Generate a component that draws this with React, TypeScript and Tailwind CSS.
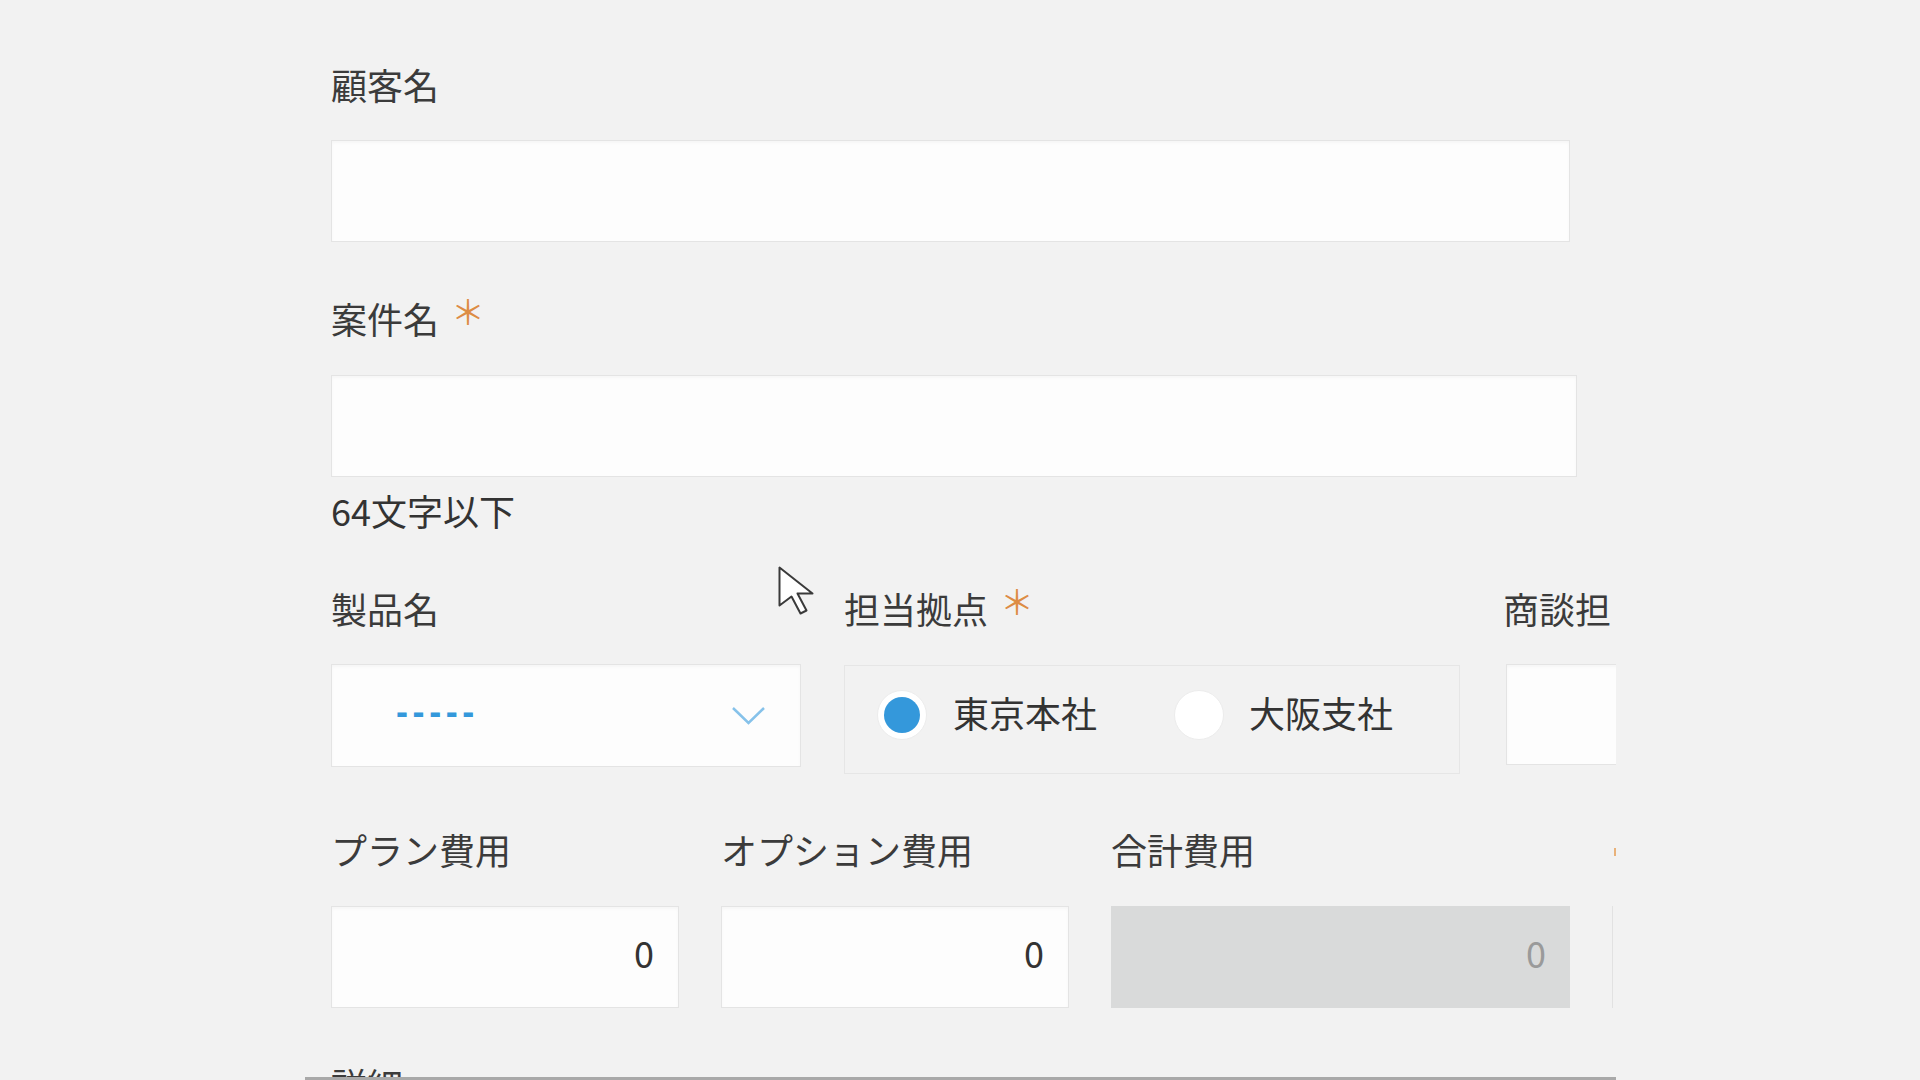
import React from 'react';

const Asterisk: React.FC = () => (
  <span className="relative -top-[9px] ml-[12px] text-[34px] text-[#dd8c45]">＊</span>
);

const Label: React.FC<{ text: string; required?: boolean }> = ({ text, required }) => (
  <div className="h-[48px] leading-[42px] text-[36px] text-[#3b3b3b] whitespace-nowrap">
    {text}
    {required && <Asterisk />}
  </div>
);

const inputBox =
  'border border-[#e4e4e4] bg-[#fdfdfd] shadow-[inset_0_2px_3px_rgba(0,0,0,0.03)]';

const NumberField: React.FC<{ label: string; width: string; disabled?: boolean }> = ({
  label,
  width,
  disabled,
}) => (
  <div className={`shrink-0 ${width}`}>
    <Label text={label} />
    <div
      className={`mt-[30px] h-[102px] flex items-center justify-end pr-[24px] pb-[10px] text-[36px] ${
        disabled ? 'bg-[#d9dada] text-[#9a9a9a]' : `${inputBox} text-[#333]`
      }`}
    >
      0
    </div>
  </div>
);

const Radio: React.FC<{ checked?: boolean }> = ({ checked }) => (
  <span className="w-[50px] h-[50px] rounded-full bg-white border border-[#ececec] flex items-center justify-center shrink-0">
    {checked && <span className="w-[36px] h-[36px] rounded-full bg-[#3498db]" />}
  </span>
);

const Cursor: React.FC = () => (
  <svg
    className="absolute left-[778px] top-[566px]"
    width="36"
    height="50"
    viewBox="-1.5 -1.5 36 50"
  >
    <path
      d="M0 0 L0 38 L12 29 L21 46 L27 43 L18 26 L33 26 Z"
      fill="#ffffff"
      stroke="#3a3a3a"
      strokeWidth="2"
      strokeLinejoin="round"
    />
  </svg>
);

const App: React.FC = () => {
  return (
    <div className="relative w-[1920px] h-[1080px] overflow-hidden bg-[#f2f2f2] font-['Noto_Sans_CJK_JP','Noto_Sans',sans-serif]">
      <div className="ml-[305px] w-[1311px] h-[1080px] overflow-hidden border-b-[3px] border-[#a9a9a9] pl-[26px] pt-[63px]">
        {/* 顧客名 */}
        <Label text="顧客名" />
        <div className={`mt-[29px] h-[102px] w-[1239px] ${inputBox}`} />

        {/* 案件名 */}
        <div className="mt-[55px]">
          <Label text="案件名" required />
        </div>
        <div className={`mt-[30px] h-[102px] w-[1246px] ${inputBox}`} />
        <div className="mt-[12px] h-[48px] leading-[42px] text-[36px] text-[#333]">64文字以下</div>

        {/* 製品名 / 担当拠点 / 商談担当 */}
        <div className="mt-[50px] flex items-start gap-[43px]">
          <div className="shrink-0 w-[470px]">
            <Label text="製品名" />
            <div className={`mt-[29px] h-[103px] flex items-center justify-between pl-[64px] pr-[34px] ${inputBox}`}>
              <span className="relative -top-[4px] text-[36px] leading-none tracking-[4.6px] text-[#3498db] font-['Liberation_Sans',sans-serif] font-bold">
                -----
              </span>
              <svg width="35" height="20" viewBox="0 0 35 20">
                <polyline
                  points="2,2 17.5,17 33,2"
                  fill="none"
                  stroke="#86c2ea"
                  strokeWidth="2.5"
                />
              </svg>
            </div>
          </div>

          <div className="shrink-0 w-[616px]">
            <Label text="担当拠点" required />
            <div className="mt-[30px] h-[109px] border border-[#e6e6e6] flex items-center pl-[32px] pb-[10px]">
              <Radio checked />
              <span className="relative -top-[3px] ml-[26px] text-[36px] text-[#333]">東京本社</span>
              <span className="ml-[77px]">
                <Radio />
              </span>
              <span className="relative -top-[3px] ml-[25px] text-[36px] text-[#333]">大阪支社</span>
            </div>
          </div>

          <div className="shrink-0 w-[300px]">
            <Label text="商談担" />
            <div className={`mt-[29px] ml-[3px] h-[101px] ${inputBox}`} />
          </div>
        </div>

        {/* 費用 */}
        <div className="mt-[54px] flex items-start gap-[42px]">
          <NumberField label="プラン費用" width="w-[348px]" />
          <NumberField label="オプション費用" width="w-[348px]" />
          <NumberField label="合計費用" width="w-[459px]" disabled />
          <div className="shrink-0 w-[300px]">
            <div className="h-[48px] flex items-center">
              <span className="ml-[2px] w-[2px] h-[8px] bg-[#e9b27a]" />
            </div>
            <div className="mt-[30px] h-[102px] border-l border-[#e2e2e2]" />
          </div>
        </div>

        {/* 詳細 */}
        <div className="mt-[55px]">
          <Label text="詳細" />
        </div>
      </div>
      <Cursor />
    </div>
  );
};

export default App;
